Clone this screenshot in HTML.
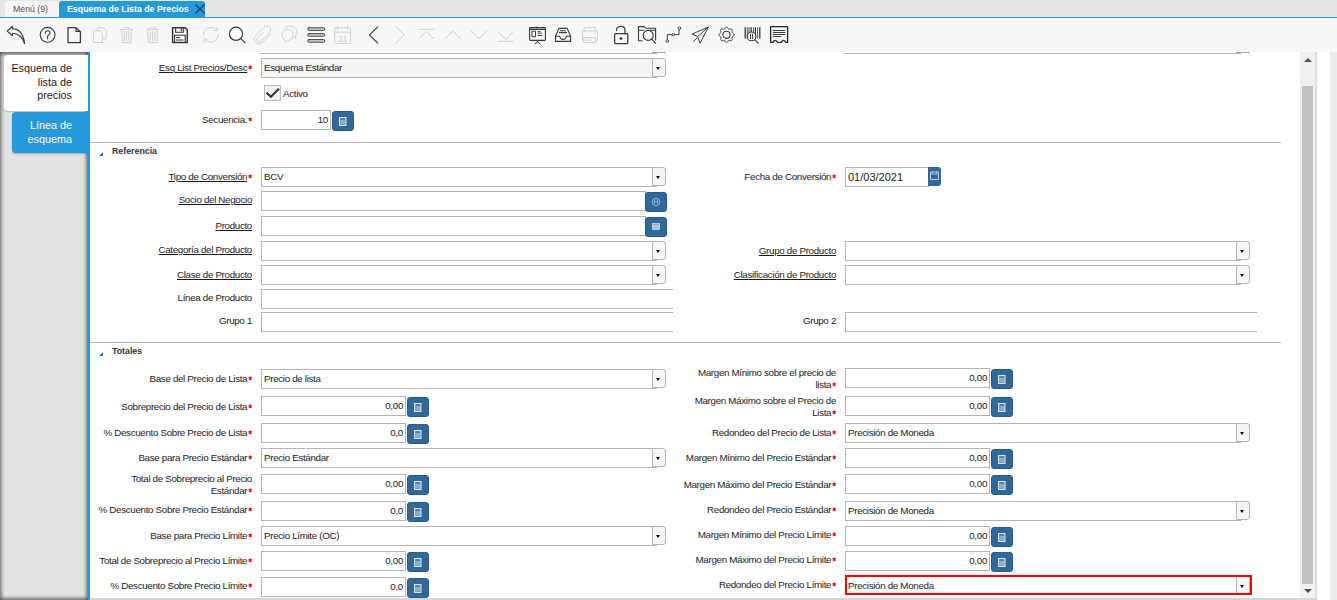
<!DOCTYPE html><html><head><meta charset='utf-8'><style>
*{box-sizing:border-box;margin:0;padding:0}
html,body{width:1337px;height:600px;overflow:hidden;background:#fff;font-family:"Liberation Sans",sans-serif;color:#333}
.a{position:absolute}
.lbl{position:absolute;font-size:9.8px;letter-spacing:-.33px;color:#1c1c1c;white-space:nowrap;text-align:right;line-height:11.7px}
.lbl u{text-decoration:underline;text-underline-offset:1px}
.req{position:relative;top:-1.2px;margin-left:.4px}
.inp{position:absolute;border:1px solid #b5b5b5;background:#fff;font-size:9.8px;letter-spacing:-.33px;color:#1c1c1c;padding-left:2px;white-space:nowrap;overflow:hidden}
.num{text-align:right;padding-right:2px;padding-left:0}
.ddb{position:absolute;width:14px;border:1px solid #b5b5b5;border-radius:0 3px 3px 0;background:#f5f5f5}
.ddb:after{content:"";position:absolute;left:3.3px;top:7.5px;border-left:2.8px solid transparent;border-right:2.8px solid transparent;border-top:3px solid #000}
.btn{position:absolute;width:22px;height:20px;background:#30689c;border:1px solid #245c8e;border-radius:3px}
.sep{position:absolute;left:90px;width:1191px;height:1px;background:#b8b8b8}
.hdr{position:absolute;font-size:8.8px;font-weight:bold;color:#333;line-height:11px}
.tri{position:absolute;width:0;height:0;border-left:4px solid transparent;border-bottom:4px solid #1b6fd0}
.hl{position:absolute;height:1px;background:#b5b5b5}
</style></head><body>
<div class='a' style='left:0;top:0;width:1337px;height:18px;background:#e6e6e6'></div>
<div class='a' style='left:5px;top:1px;width:54px;height:16px;background:#f4f4f4;border-radius:2px 2px 0 0'></div>
<div class='a' style='left:13px;top:3px;font-size:8.75px;color:#555;line-height:12px'>Menú (9)</div>
<div class='a' style='left:59px;top:1px;width:146px;height:17px;background:#2499dc;border-radius:3px 3px 0 0'></div>
<div class='a' style='left:67px;top:3px;font-size:8.8px;font-weight:bold;color:#fff;line-height:12px'>Esquema de Lista de Precios</div>
<svg class='a' style='left:194px;top:3px' width='12' height='12' viewBox='0 0 12 12'><path d='M1.5 1.5L10.5 10.5M10.5 1.5L1.5 10.5' stroke='#1a3550' stroke-width='1.1'/></svg>
<div class='a' style='left:0;top:17px;width:1337px;height:1px;background:#2499dc'></div>
<div class='a' style='left:0;top:18px;width:1337px;height:34px;background:#f7f7f7'></div>
<svg class='a' style='left:0;top:0' width='800' height='52' viewBox='0 0 800 52' fill='none' stroke-linecap='round' stroke-linejoin='round'><path d='M7.3 31 L12.3 26.3 L12.5 28.6 C18.5 29 23.5 33.5 24.6 43.6 C22.6 37.3 18.5 33.4 12.5 33.2 L12.3 35.8 Z' stroke='#3a3a3a' stroke-width='1.1'/><circle cx='47.6' cy='34.8' r='7.4' stroke='#3a3a3a' stroke-width='1.1'/><path d='M45.4 33.2 C45.3 31.6 46.4 30.7 47.7 30.7 C49 30.7 50 31.6 50 32.9 C50 34.6 47.6 34.9 47.6 36.6 L47.6 38.7' stroke='#3a3a3a' stroke-width='1.1'/><path d='M68 27.6 H76 L80.4 32 V42.6 H68 Z' stroke='#3a3a3a' stroke-width='1.3'/><path d='M76 27.8 V31.4 H80.2' stroke='#3a3a3a' stroke-width='1.2'/><path d='M97.8 30 V27.8 H103.6 L106.3 30.5 V38.8 H103' stroke='#cfcfcf' stroke-width='1'/><path d='M93.8 30.8 H99.6 L102.4 33.6 V42.5 H93.8 Z' stroke='#cfcfcf' stroke-width='1'/><path d='M120.3 29.4 H132.9 M124.3 29.4 V27.4 H128.9 V29.4 M121.6 29.6 L122.5 42.6 H130.8 L131.6 29.6 M124.4 31.5 V40.5 M126.6 31.5 V40.5 M128.8 31.5 V40.5' stroke='#cfcfcf' stroke-width='1'/><path d='M147.3 29.4 H157.8 M148.5 29.4 C148.5 27 151.5 27 152.5 28.5 C153.5 27 156.6 27 156.6 29.4 M147.6 29.6 L148.5 42.6 H156.8 L157.6 29.6 M150.4 31.5 V40.5 M152.6 31.5 V40.5 M154.8 31.5 V40.5' stroke='#cfcfcf' stroke-width='1'/><path d='M172.6 27.8 H185.3 L187.3 29.8 V42.6 H172.6 Z' stroke='#3a3a3a' stroke-width='1.5'/><path d='M175.6 27.8 V32.3 H183.3 V27.8' stroke='#3a3a3a' stroke-width='1.1'/><path d='M181.3 28.6 V30.8' stroke='#3a3a3a' stroke-width='1.1'/><path d='M174.6 42.6 V35.2 H185.2 V42.6' stroke='#3a3a3a' stroke-width='1.1'/><path d='M176.5 37.5 H179.5 M176.5 40 H183' stroke='#3a3a3a' stroke-width='1.1'/><path d='M203.5 35 C203.5 30.5 206.8 27.5 210.8 27.5 C213.3 27.5 215.3 28.6 216.8 30.4 M217.2 27.3 V30.6 H214' stroke='#cfcfcf' stroke-width='1'/><path d='M218 34.5 C218 39 214.7 42.2 210.7 42.2 C208.2 42.2 206.2 41.1 204.7 39.3 M204.3 42.4 V39.1 H207.5' stroke='#cfcfcf' stroke-width='1'/><circle cx='236' cy='33.8' r='6.6' stroke='#3a3a3a' stroke-width='1.2'/><path d='M240.8 38.6 L244.8 42.6' stroke='#3a3a3a' stroke-width='1.2'/><path d='M263.2 32.5 L257.4 38.3 C256.4 39.3 256.8 40.7 257.6 41.4 C258.6 42.3 259.8 42.1 260.7 41.2 L269.3 32.6 C271.2 30.7 271.2 28.4 269.6 26.9 C268.1 25.4 265.8 25.5 264 27.3 L255.8 35.5 C253.8 37.5 253.6 40.6 255.6 42.5 C257.6 44.4 260.5 44.3 262.5 42.3 L270.6 34.2' stroke='#cfcfcf' stroke-width='1'/><path d='M291 38.6 C294.5 37.6 297 35 297 32 C297 28.6 294 26.2 290.2 26.2 C287.6 26.2 285.4 27.3 284.2 29' stroke='#cfcfcf' stroke-width='1'/><path d='M296 38.6 L295.2 36.2' stroke='#cfcfcf' stroke-width='1'/><path d='M285.3 42.2 L284.6 39.6 C282.4 38.5 282 36.7 282 35 C282 31.7 284.9 29.6 288.2 29.6 C291.5 29.6 293.2 31.8 293.2 34.8 C293.2 38 290.7 40.4 287.3 40.4 L285.3 42.2' stroke='#cfcfcf' stroke-width='1'/><rect x='307.8' y='27.8' width='17' height='2.6' rx='1.3' fill='#d4d4d4' stroke='#3a3a3a' stroke-width='.95'/><rect x='307.8' y='33.6' width='17' height='2.6' rx='1.3' fill='#d4d4d4' stroke='#3a3a3a' stroke-width='.95'/><rect x='307.8' y='39.6' width='17' height='2.6' rx='1.3' fill='#d4d4d4' stroke='#3a3a3a' stroke-width='.95'/><rect x='334.6' y='27.8' width='16' height='15.6' rx='1' stroke='#cfcfcf' stroke-width='1'/><path d='M334.6 32.2 H350.6 M337.6 26.3 V29.5 M347.6 26.3 V29.5' stroke='#cfcfcf' stroke-width='1'/><text x='342.6' y='41.8' font-size='9' text-anchor='middle' fill='#d2d2d2' stroke='none' font-family='Liberation Sans'>31</text><path d='M377.7 27 L369.4 35 L377.7 43' stroke='#4a4a4a' stroke-width='1.1'/><path d='M396.2 27 L404.2 35 L396.2 43' stroke='#cfcfcf' stroke-width='1'/><path d='M419 29.3 H434 M419.2 38.8 L426.5 31.3 L433.8 38.8' stroke='#cfcfcf' stroke-width='1'/><path d='M445.3 38.8 L452.8 31.2 L460.6 38.8' stroke='#cfcfcf' stroke-width='1'/><path d='M471.3 31.2 L479 38.8 L486.8 31.2' stroke='#cfcfcf' stroke-width='1'/><path d='M498.4 32 L505.6 39.6 L512.8 32 M498.2 41.3 H513' stroke='#cfcfcf' stroke-width='1'/><rect x='529.6' y='27.6' width='15.8' height='12.8' rx='.8' stroke='#3a3a3a' stroke-width='1.1'/><path d='M529.6 29.3 H545.4' stroke='#3a3a3a' stroke-width='1.2'/><path d='M536.8 27 V27.8' stroke='#3a3a3a' stroke-width='1.2'/><rect x='532.3' y='31.2' width='3.2' height='5.6' stroke='#3a3a3a' stroke-width='1'/><path d='M538 31.6 H540 M538 33.2 H541.5 M538 35.5 H542' stroke='#3a3a3a' stroke-width='1'/><path d='M537.5 40.5 V42 L535 43.8 M537.5 42 L540 43.8' stroke='#3a3a3a' stroke-width='1'/><path d='M555.5 36.2 L558.8 28.4 H567.2 L570.6 36.2 V41.4 H555.5 Z' stroke='#3a3a3a' stroke-width='1.1'/><path d='M555.5 36.2 H559.8 C560 38.6 561.6 39.4 563 39.4 C564.4 39.4 566 38.6 566.2 36.2 H570.6' stroke='#3a3a3a' stroke-width='1.1'/><path d='M560.5 30.8 H565.5 M559.5 32.6 H566.5' stroke='#3a3a3a' stroke-width='1.1'/><path d='M584.2 31 V27.6 H595.6 V31 M583.6 40.3 H582.4 V31 H597.4 V40.3 H596.2 M584.2 37.6 H595.6 V42.6 H584.2 Z M587 40.2 H591' stroke='#cfcfcf' stroke-width='1'/><path d='M593.2 33.4 H593.4 M595 33.4 H595.2' stroke='#cfcfcf' stroke-width='1'/><path d='M616.5 30.6 V29.6 C616.5 27.6 618.6 26.3 620.8 26.3 C623 26.3 625 27.7 625 30 V34' stroke='#3a3a3a' stroke-width='1.2'/><rect x='614.6' y='33.6' width='13.2' height='10' rx='1.2' stroke='#3a3a3a' stroke-width='1.3'/><circle cx='621' cy='38.6' r='1.1' fill='#3a3a3a' stroke='#3a3a3a' stroke-width='.6'/><path d='M642.2 40.7 H638.5 V26.6 H644 L646 28.3 H655.6 V40 M638.5 30.2 H644 M649.5 30.2 H655.6' stroke='#3a3a3a' stroke-width='1.1'/><circle cx='648.2' cy='35.4' r='5' stroke='#3a3a3a' stroke-width='1.1'/><path d='M651.8 39.2 L655.6 43.3' stroke='#3a3a3a' stroke-width='1.1'/><path d='M667.3 39.6 V34.6 H672 M674.5 34.6 H679 V29.5' stroke='#3a3a3a' stroke-width='1'/><circle cx='667.3' cy='41.2' r='1.3' stroke='#3a3a3a' stroke-width='.9'/><circle cx='673.3' cy='34.6' r='1.3' stroke='#3a3a3a' stroke-width='.9'/><circle cx='679.4' cy='28.2' r='1.3' stroke='#3a3a3a' stroke-width='.9'/><path d='M708 27.3 L692.2 34 L697.6 36.6 L700 42.8 Z M708 27.3 L697.6 36.6 M696.8 38.2 L693.4 41.4' stroke='#3a3a3a' stroke-width='1'/><path d='M734.25 34.80 L734.12 35.30 L733.76 35.76 L733.27 36.15 L732.75 36.48 L732.34 36.78 L732.09 37.12 L732.03 37.53 L732.11 38.04 L732.24 38.63 L732.31 39.26 L732.24 39.83 L731.98 40.28 L731.53 40.54 L730.96 40.61 L730.33 40.54 L729.74 40.41 L729.23 40.33 L728.82 40.39 L728.48 40.64 L728.18 41.05 L727.85 41.57 L727.46 42.06 L727.00 42.42 L726.50 42.55 L726.00 42.42 L725.54 42.06 L725.15 41.57 L724.82 41.05 L724.52 40.64 L724.18 40.39 L723.77 40.33 L723.26 40.41 L722.67 40.54 L722.04 40.61 L721.47 40.54 L721.02 40.28 L720.76 39.83 L720.69 39.26 L720.76 38.63 L720.89 38.04 L720.97 37.53 L720.91 37.12 L720.66 36.78 L720.25 36.48 L719.73 36.15 L719.24 35.76 L718.88 35.30 L718.75 34.80 L718.88 34.30 L719.24 33.84 L719.73 33.45 L720.25 33.12 L720.66 32.82 L720.91 32.48 L720.97 32.07 L720.89 31.56 L720.76 30.97 L720.69 30.34 L720.76 29.77 L721.02 29.32 L721.47 29.06 L722.04 28.99 L722.67 29.06 L723.26 29.19 L723.77 29.27 L724.18 29.21 L724.52 28.96 L724.82 28.55 L725.15 28.03 L725.54 27.54 L726.00 27.18 L726.50 27.05 L727.00 27.18 L727.46 27.54 L727.85 28.03 L728.18 28.55 L728.48 28.96 L728.82 29.21 L729.23 29.27 L729.74 29.19 L730.33 29.06 L730.96 28.99 L731.53 29.06 L731.98 29.32 L732.24 29.77 L732.31 30.34 L732.24 30.97 L732.11 31.56 L732.03 32.07 L732.09 32.48 L732.34 32.82 L732.75 33.12 L733.27 33.45 L733.76 33.84 L734.12 34.30 Z' stroke='#3a3a3a' stroke-width='1'/><circle cx='726.5' cy='34.8' r='3.6' stroke='#3a3a3a' stroke-width='1.1'/><path d='M745.2 27.3 V38.6' stroke='#3a3a3a' stroke-width='1.3' stroke-linecap='butt'/><path d='M747.3 27.3 V38.6' stroke='#3a3a3a' stroke-width='0.8' stroke-linecap='butt'/><path d='M749 27.3 V38.6' stroke='#3a3a3a' stroke-width='0.9' stroke-linecap='butt'/><path d='M751.2 27.3 V38.6' stroke='#3a3a3a' stroke-width='1.3' stroke-linecap='butt'/><path d='M753.6 27.3 V38.6' stroke='#3a3a3a' stroke-width='0.8' stroke-linecap='butt'/><path d='M755.4 27.3 V38.6' stroke='#3a3a3a' stroke-width='1.2' stroke-linecap='butt'/><path d='M757.6 27.3 V38.6' stroke='#3a3a3a' stroke-width='0.8' stroke-linecap='butt'/><path d='M759.8 27.3 V38.6' stroke='#3a3a3a' stroke-width='1.3' stroke-linecap='butt'/><circle cx='751.6' cy='36.4' r='4.4' fill='#f7f7f7' stroke='#3a3a3a' stroke-width='1.1'/><path d='M750.5 34.3 V38.6 M752.4 34 V38.8' stroke='#3a3a3a' stroke-width='1'/><path d='M754.8 39.8 L758.4 43.2' stroke='#3a3a3a' stroke-width='1.1'/><path d='M770.6 26.6 H787.6 V42.4 H785.8 C785.5 41 784.7 40.3 783.6 40.3 C782.5 40.3 781.7 41 781.4 42.4 H777.4 C777.1 41 776.3 40.3 775.2 40.3 C774.1 40.3 773.3 41 773 42.4 H770.6 Z' stroke='#262626' stroke-width='1.3'/><path d='M772.8 30.5 H785.2 M772.8 32.5 H785.2 M772.8 34.5 H785.2 M772.8 36.5 H781' stroke='#3a3a3a' stroke-width='1' stroke-linecap='butt'/></svg>
<div class='a' style='left:0;top:52px;width:88px;height:548px;background:#e3e3e3;box-shadow:inset 0 3px 3px rgba(0,0,0,.38), inset 3px 0 3px rgba(0,0,0,.2), inset -3px 0 3px rgba(0,0,0,.25), inset 0 -3px 3px rgba(0,0,0,.3)'></div>
<div class='a' style='left:4px;top:55px;width:84px;height:55.5px;background:#fff;border-radius:4px 0 0 4px;box-shadow:0 1px 2px rgba(0,0,0,.2)'></div>
<div class='a' style='left:4px;top:62px;width:68px;font-size:10.8px;line-height:13.7px;color:#222;text-align:right'>Esquema de<br>lista de<br>precios</div>
<div class='a' style='left:12px;top:112px;width:76px;height:41px;background:#2499dc;border-radius:4px 0 0 4px;box-shadow:0 1px 2px rgba(0,0,0,.25)'></div>
<div class='a' style='left:4px;top:119px;width:68px;font-size:10.8px;line-height:13.8px;color:#fff;text-align:right'>Línea de<br>esquema</div>
<div class='a' style='left:88px;top:52px;width:2px;height:548px;background:#2499dc'></div>
<div class='a' style='left:1300px;top:52px;width:15px;height:547px;background:#f0f0f0'></div>
<div class='a' style='left:1302px;top:86px;width:11px;height:498px;background:#c1c1c1'></div>
<div class='a' style='left:1303.5px;top:57.5px;width:0;height:0;border-left:4px solid transparent;border-right:4px solid transparent;border-bottom:4.5px solid #505050'></div>
<div class='a' style='left:1303.5px;top:588.5px;width:0;height:0;border-left:4px solid transparent;border-right:4px solid transparent;border-top:4.5px solid #505050'></div>
<div class='a' style='left:1315px;top:52px;width:3px;height:548px;background:linear-gradient(90deg,#cfcfcf,#ececec 60%,#fafafa)'></div>
<div class='a' style='left:1330px;top:52px;width:7px;height:548px;background:#ebebeb'></div>
<div class='a' style='left:90px;top:598px;width:1227px;height:2px;background:#d6d6d6'></div>
<div class='hl' style='left:261px;top:53px;width:396px'></div>
<div class='hl' style='left:652px;top:52px;width:14px;background:#aaa'></div>
<div class='hl' style='left:845px;top:53px;width:396px'></div>
<div class='hl' style='left:1236px;top:52px;width:14px;background:#aaa'></div>
<div class='lbl' style='right:1085px;top:62px'><u>Esq List Precios/Desc</u><svg class='req' width='4.4' height='5' viewBox='0 0 4.4 5'><path d='M2.2 .6 V4.2 M.6 1.5 L3.8 3.3 M.6 3.3 L3.8 1.5' stroke='#f00' stroke-width='1.15'/></svg></div>
<div class='inp' style='left:261px;top:58px;width:396px;height:20px;background:#f4f4f4;line-height:18px'>Esquema Estándar</div>
<div class='ddb' style='left:652px;top:58px;height:19px'></div>
<div class='a' style='left:264px;top:85px;width:17px;height:16px;background:#f1f1f1;border:1px solid #b3c0cc'></div>
<svg class='a' style='left:265px;top:86px' width='15' height='14' viewBox='0 0 15 14'><path d='M1.6 6.8L5.9 10.8L14 2.7' fill='none' stroke='#333' stroke-width='2'/></svg>
<div class='a' style='left:283px;top:88px;font-size:9.8px;letter-spacing:-.33px;line-height:12px;color:#262626'>Activo</div>
<div class='lbl' style='right:1085px;top:114px'>Secuencia.<svg class='req' width='4.4' height='5' viewBox='0 0 4.4 5'><path d='M2.2 .6 V4.2 M.6 1.5 L3.8 3.3 M.6 3.3 L3.8 1.5' stroke='#f00' stroke-width='1.15'/></svg></div>
<div class='inp num' style='left:261px;top:110px;width:70px;height:20px;line-height:18px'>10</div>
<div class='btn' style='left:332px;top:111px'></div>
<svg class='a' style='left:339px;top:117px' width='8' height='9' viewBox='0 0 8 9'><rect x='.5' y='.5' width='6.5' height='8' fill='#7d9dbd' stroke='#d9e3ec' stroke-width='1'/><path d='M1.5 2 H6' stroke='#2e6595' stroke-width='1'/><path d='M1.5 4 H6 M1.5 6 H6' stroke='#a9c0d6' stroke-width='.8'/></svg>
<div class='sep' style='top:142px'></div>
<div class='tri' style='left:99px;top:152px'></div>
<div class='hdr' style='left:112px;top:146px'>Referencia</div>
<div class='lbl' style='right:1085px;top:171px'><u>Tipo de Conversión</u><svg class='req' width='4.4' height='5' viewBox='0 0 4.4 5'><path d='M2.2 .6 V4.2 M.6 1.5 L3.8 3.3 M.6 3.3 L3.8 1.5' stroke='#f00' stroke-width='1.15'/></svg></div>
<div class='inp' style='left:261px;top:167px;width:396px;height:20px;background:#fff;line-height:18px'>BCV</div>
<div class='ddb' style='left:652px;top:167px;height:19px'></div>
<div class='lbl' style='right:501px;top:171px'>Fecha de Conversión<svg class='req' width='4.4' height='5' viewBox='0 0 4.4 5'><path d='M2.2 .6 V4.2 M.6 1.5 L3.8 3.3 M.6 3.3 L3.8 1.5' stroke='#f00' stroke-width='1.15'/></svg></div>
<div class='inp' style='left:845px;top:167px;width:84px;height:20px;line-height:18px;font-size:11px;letter-spacing:0;padding-left:2px'>01/03/2021</div>
<div class='a' style='left:928px;top:167px;width:13px;height:19px;background:#30689c;border-radius:0 3px 3px 0'></div>
<svg class='a' style='left:929px;top:169px' width='11' height='12' viewBox='0 0 11 12'><path d='M1.5 3 H9.5 V10.5 H1.5 Z M1.5 5 H9.5 M3.5 2 V3.5 M7.5 2 V3.5' fill='none' stroke='#c3d4e4' stroke-width='.9'/></svg>
<div class='lbl' style='right:1085px;top:194px'><u>Socio del Negocio</u></div>
<div class='inp' style='left:261px;top:191px;width:385px;height:20px;line-height:18px'></div>
<div class='btn' style='left:645px;top:192px'></div>
<svg class='a' style='left:651px;top:197px' width='10' height='10' viewBox='0 0 10 10'><circle cx='5' cy='5' r='3.6' fill='none' stroke='#a7bfd6' stroke-width='.9'/><path d='M3.5 3.2 V6.8 M6.5 3.2 V6.8 M3.5 5 H6.5' stroke='#a7bfd6' stroke-width='.7'/></svg>
<div class='lbl' style='right:1085px;top:220px'><u>Producto</u></div>
<div class='inp' style='left:261px;top:216px;width:385px;height:20px;line-height:18px'></div>
<div class='btn' style='left:645px;top:217px'></div>
<svg class='a' style='left:652px;top:223px' width='8' height='8' viewBox='0 0 8 8'><rect x='.5' y='.5' width='7' height='6' fill='#90acc8' stroke='#c9d7e5' stroke-width='.8'/><path d='M2 2 V6 M4 2 V6 M6 2 V6' stroke='#e4ebf2' stroke-width='.8'/></svg>
<div class='lbl' style='right:1085px;top:244px'><u>Categoría del Producto</u></div>
<div class='inp' style='left:261px;top:241px;width:396px;height:20px;background:#fff;line-height:18px'></div>
<div class='ddb' style='left:652px;top:241px;height:19px'></div>
<div class='lbl' style='right:501px;top:245px'><u>Grupo de Producto</u></div>
<div class='inp' style='left:845px;top:241px;width:396px;height:20px;background:#fff;line-height:18px'></div>
<div class='ddb' style='left:1236px;top:241px;height:19px'></div>
<div class='lbl' style='right:1085px;top:269px'><u>Clase de Producto</u></div>
<div class='inp' style='left:261px;top:265px;width:396px;height:20px;background:#fff;line-height:18px'></div>
<div class='ddb' style='left:652px;top:265px;height:19px'></div>
<div class='lbl' style='right:501px;top:269px'><u>Clasificación de Producto</u></div>
<div class='inp' style='left:845px;top:265px;width:396px;height:20px;background:#fff;line-height:18px'></div>
<div class='ddb' style='left:1236px;top:265px;height:19px'></div>
<div class='lbl' style='right:1085px;top:292px'>Línea de Producto</div>
<div class='a' style='left:261px;top:289px;width:412px;height:20px;border:1px solid #b5b5b5;border-right:none'></div>
<div class='lbl' style='right:1085px;top:315px'>Grupo 1</div>
<div class='a' style='left:261px;top:312px;width:412px;height:20px;border:1px solid #b5b5b5;border-right:none'></div>
<div class='lbl' style='right:501px;top:315px'>Grupo 2</div>
<div class='a' style='left:845px;top:312px;width:412px;height:20px;border:1px solid #b5b5b5;border-right:none'></div>
<div class='sep' style='top:342px'></div>
<div class='tri' style='left:99px;top:352px'></div>
<div class='hdr' style='left:112px;top:346px'>Totales</div>
<div class='lbl' style='right:1085px;top:373px'>Base del Precio de Lista<svg class='req' width='4.4' height='5' viewBox='0 0 4.4 5'><path d='M2.2 .6 V4.2 M.6 1.5 L3.8 3.3 M.6 3.3 L3.8 1.5' stroke='#f00' stroke-width='1.15'/></svg></div>
<div class='inp' style='left:261px;top:369px;width:396px;height:20px;background:#fff;line-height:18px'>Precio de lista</div>
<div class='ddb' style='left:652px;top:369px;height:19px'></div>
<div class='lbl' style='right:1085px;top:401px'>Sobreprecio del Precio de Lista<svg class='req' width='4.4' height='5' viewBox='0 0 4.4 5'><path d='M2.2 .6 V4.2 M.6 1.5 L3.8 3.3 M.6 3.3 L3.8 1.5' stroke='#f00' stroke-width='1.15'/></svg></div>
<div class='inp num' style='left:261px;top:396px;width:145px;height:20px;line-height:18px'>0,00</div>
<div class='btn' style='left:407px;top:397px'></div>
<svg class='a' style='left:414px;top:403px' width='8' height='9' viewBox='0 0 8 9'><rect x='.5' y='.5' width='6.5' height='8' fill='#7d9dbd' stroke='#d9e3ec' stroke-width='1'/><path d='M1.5 2 H6' stroke='#2e6595' stroke-width='1'/><path d='M1.5 4 H6 M1.5 6 H6' stroke='#a9c0d6' stroke-width='.8'/></svg>
<div class='lbl' style='right:1085px;top:427px'>% Descuento Sobre Precio de Lista<svg class='req' width='4.4' height='5' viewBox='0 0 4.4 5'><path d='M2.2 .6 V4.2 M.6 1.5 L3.8 3.3 M.6 3.3 L3.8 1.5' stroke='#f00' stroke-width='1.15'/></svg></div>
<div class='inp num' style='left:261px;top:423px;width:145px;height:20px;line-height:18px'>0,0</div>
<div class='btn' style='left:407px;top:424px'></div>
<svg class='a' style='left:414px;top:430px' width='8' height='9' viewBox='0 0 8 9'><rect x='.5' y='.5' width='6.5' height='8' fill='#7d9dbd' stroke='#d9e3ec' stroke-width='1'/><path d='M1.5 2 H6' stroke='#2e6595' stroke-width='1'/><path d='M1.5 4 H6 M1.5 6 H6' stroke='#a9c0d6' stroke-width='.8'/></svg>
<div class='lbl' style='right:1085px;top:452px'>Base para Precio Estándar<svg class='req' width='4.4' height='5' viewBox='0 0 4.4 5'><path d='M2.2 .6 V4.2 M.6 1.5 L3.8 3.3 M.6 3.3 L3.8 1.5' stroke='#f00' stroke-width='1.15'/></svg></div>
<div class='inp' style='left:261px;top:448px;width:396px;height:20px;background:#fff;line-height:18px'>Precio Estándar</div>
<div class='ddb' style='left:652px;top:448px;height:19px'></div>
<div class='lbl' style='right:1085px;top:473px'>Total de Sobreprecio al Precio<br>Estándar<svg class='req' width='4.4' height='5' viewBox='0 0 4.4 5'><path d='M2.2 .6 V4.2 M.6 1.5 L3.8 3.3 M.6 3.3 L3.8 1.5' stroke='#f00' stroke-width='1.15'/></svg></div>
<div class='inp num' style='left:261px;top:474px;width:145px;height:20px;line-height:18px'>0,00</div>
<div class='btn' style='left:407px;top:475px'></div>
<svg class='a' style='left:414px;top:481px' width='8' height='9' viewBox='0 0 8 9'><rect x='.5' y='.5' width='6.5' height='8' fill='#7d9dbd' stroke='#d9e3ec' stroke-width='1'/><path d='M1.5 2 H6' stroke='#2e6595' stroke-width='1'/><path d='M1.5 4 H6 M1.5 6 H6' stroke='#a9c0d6' stroke-width='.8'/></svg>
<div class='lbl' style='right:1085px;top:504px'>% Descuento Sobre Precio Estándar<svg class='req' width='4.4' height='5' viewBox='0 0 4.4 5'><path d='M2.2 .6 V4.2 M.6 1.5 L3.8 3.3 M.6 3.3 L3.8 1.5' stroke='#f00' stroke-width='1.15'/></svg></div>
<div class='inp num' style='left:261px;top:501px;width:145px;height:20px;line-height:18px'>0,0</div>
<div class='btn' style='left:407px;top:502px'></div>
<svg class='a' style='left:414px;top:508px' width='8' height='9' viewBox='0 0 8 9'><rect x='.5' y='.5' width='6.5' height='8' fill='#7d9dbd' stroke='#d9e3ec' stroke-width='1'/><path d='M1.5 2 H6' stroke='#2e6595' stroke-width='1'/><path d='M1.5 4 H6 M1.5 6 H6' stroke='#a9c0d6' stroke-width='.8'/></svg>
<div class='lbl' style='right:1085px;top:530px'>Base para Precio Límite<svg class='req' width='4.4' height='5' viewBox='0 0 4.4 5'><path d='M2.2 .6 V4.2 M.6 1.5 L3.8 3.3 M.6 3.3 L3.8 1.5' stroke='#f00' stroke-width='1.15'/></svg></div>
<div class='inp' style='left:261px;top:526px;width:396px;height:20px;background:#fff;line-height:18px'>Precio Límite (OC)</div>
<div class='ddb' style='left:652px;top:526px;height:19px'></div>
<div class='lbl' style='right:1085px;top:555px'>Total de Sobreprecio al Precio Límite<svg class='req' width='4.4' height='5' viewBox='0 0 4.4 5'><path d='M2.2 .6 V4.2 M.6 1.5 L3.8 3.3 M.6 3.3 L3.8 1.5' stroke='#f00' stroke-width='1.15'/></svg></div>
<div class='inp num' style='left:261px;top:551px;width:145px;height:20px;line-height:18px'>0,00</div>
<div class='btn' style='left:407px;top:552px'></div>
<svg class='a' style='left:414px;top:558px' width='8' height='9' viewBox='0 0 8 9'><rect x='.5' y='.5' width='6.5' height='8' fill='#7d9dbd' stroke='#d9e3ec' stroke-width='1'/><path d='M1.5 2 H6' stroke='#2e6595' stroke-width='1'/><path d='M1.5 4 H6 M1.5 6 H6' stroke='#a9c0d6' stroke-width='.8'/></svg>
<div class='lbl' style='right:1085px;top:580px'>% Descuento Sobre Precio Límite<svg class='req' width='4.4' height='5' viewBox='0 0 4.4 5'><path d='M2.2 .6 V4.2 M.6 1.5 L3.8 3.3 M.6 3.3 L3.8 1.5' stroke='#f00' stroke-width='1.15'/></svg></div>
<div class='inp num' style='left:261px;top:577px;width:145px;height:20px;line-height:18px'>0,0</div>
<div class='btn' style='left:407px;top:578px'></div>
<svg class='a' style='left:414px;top:584px' width='8' height='9' viewBox='0 0 8 9'><rect x='.5' y='.5' width='6.5' height='8' fill='#7d9dbd' stroke='#d9e3ec' stroke-width='1'/><path d='M1.5 2 H6' stroke='#2e6595' stroke-width='1'/><path d='M1.5 4 H6 M1.5 6 H6' stroke='#a9c0d6' stroke-width='.8'/></svg>
<div class='lbl' style='right:501px;top:367px'>Margen Mínimo sobre el precio de<br>lista<svg class='req' width='4.4' height='5' viewBox='0 0 4.4 5'><path d='M2.2 .6 V4.2 M.6 1.5 L3.8 3.3 M.6 3.3 L3.8 1.5' stroke='#f00' stroke-width='1.15'/></svg></div>
<div class='inp num' style='left:845px;top:368px;width:145px;height:20px;line-height:18px'>0,00</div>
<div class='btn' style='left:991px;top:369px'></div>
<svg class='a' style='left:998px;top:375px' width='8' height='9' viewBox='0 0 8 9'><rect x='.5' y='.5' width='6.5' height='8' fill='#7d9dbd' stroke='#d9e3ec' stroke-width='1'/><path d='M1.5 2 H6' stroke='#2e6595' stroke-width='1'/><path d='M1.5 4 H6 M1.5 6 H6' stroke='#a9c0d6' stroke-width='.8'/></svg>
<div class='lbl' style='right:501px;top:395px'>Margen Máximo sobre el Precio de<br>Lista<svg class='req' width='4.4' height='5' viewBox='0 0 4.4 5'><path d='M2.2 .6 V4.2 M.6 1.5 L3.8 3.3 M.6 3.3 L3.8 1.5' stroke='#f00' stroke-width='1.15'/></svg></div>
<div class='inp num' style='left:845px;top:396px;width:145px;height:20px;line-height:18px'>0,00</div>
<div class='btn' style='left:991px;top:397px'></div>
<svg class='a' style='left:998px;top:403px' width='8' height='9' viewBox='0 0 8 9'><rect x='.5' y='.5' width='6.5' height='8' fill='#7d9dbd' stroke='#d9e3ec' stroke-width='1'/><path d='M1.5 2 H6' stroke='#2e6595' stroke-width='1'/><path d='M1.5 4 H6 M1.5 6 H6' stroke='#a9c0d6' stroke-width='.8'/></svg>
<div class='lbl' style='right:501px;top:427px'>Redondeo del Precio de Lista<svg class='req' width='4.4' height='5' viewBox='0 0 4.4 5'><path d='M2.2 .6 V4.2 M.6 1.5 L3.8 3.3 M.6 3.3 L3.8 1.5' stroke='#f00' stroke-width='1.15'/></svg></div>
<div class='inp' style='left:845px;top:423px;width:396px;height:20px;background:#fff;line-height:18px'>Precisión de Moneda</div>
<div class='ddb' style='left:1236px;top:423px;height:19px'></div>
<div class='lbl' style='right:501px;top:452px'>Margen Mínimo del Precio Estándar<svg class='req' width='4.4' height='5' viewBox='0 0 4.4 5'><path d='M2.2 .6 V4.2 M.6 1.5 L3.8 3.3 M.6 3.3 L3.8 1.5' stroke='#f00' stroke-width='1.15'/></svg></div>
<div class='inp num' style='left:845px;top:448px;width:145px;height:20px;line-height:18px'>0,00</div>
<div class='btn' style='left:991px;top:449px'></div>
<svg class='a' style='left:998px;top:455px' width='8' height='9' viewBox='0 0 8 9'><rect x='.5' y='.5' width='6.5' height='8' fill='#7d9dbd' stroke='#d9e3ec' stroke-width='1'/><path d='M1.5 2 H6' stroke='#2e6595' stroke-width='1'/><path d='M1.5 4 H6 M1.5 6 H6' stroke='#a9c0d6' stroke-width='.8'/></svg>
<div class='lbl' style='right:501px;top:479px'>Margen Máximo del Precio Estándar<svg class='req' width='4.4' height='5' viewBox='0 0 4.4 5'><path d='M2.2 .6 V4.2 M.6 1.5 L3.8 3.3 M.6 3.3 L3.8 1.5' stroke='#f00' stroke-width='1.15'/></svg></div>
<div class='inp num' style='left:845px;top:474px;width:145px;height:20px;line-height:18px'>0,00</div>
<div class='btn' style='left:991px;top:475px'></div>
<svg class='a' style='left:998px;top:481px' width='8' height='9' viewBox='0 0 8 9'><rect x='.5' y='.5' width='6.5' height='8' fill='#7d9dbd' stroke='#d9e3ec' stroke-width='1'/><path d='M1.5 2 H6' stroke='#2e6595' stroke-width='1'/><path d='M1.5 4 H6 M1.5 6 H6' stroke='#a9c0d6' stroke-width='.8'/></svg>
<div class='lbl' style='right:501px;top:504px'>Redondeo del Precio Estándar<svg class='req' width='4.4' height='5' viewBox='0 0 4.4 5'><path d='M2.2 .6 V4.2 M.6 1.5 L3.8 3.3 M.6 3.3 L3.8 1.5' stroke='#f00' stroke-width='1.15'/></svg></div>
<div class='inp' style='left:845px;top:501px;width:396px;height:20px;background:#fff;line-height:18px'>Precisión de Moneda</div>
<div class='ddb' style='left:1236px;top:501px;height:19px'></div>
<div class='lbl' style='right:501px;top:529px'>Margen Mínimo del Precio Límite<svg class='req' width='4.4' height='5' viewBox='0 0 4.4 5'><path d='M2.2 .6 V4.2 M.6 1.5 L3.8 3.3 M.6 3.3 L3.8 1.5' stroke='#f00' stroke-width='1.15'/></svg></div>
<div class='inp num' style='left:845px;top:526px;width:145px;height:20px;line-height:18px'>0,00</div>
<div class='btn' style='left:991px;top:527px'></div>
<svg class='a' style='left:998px;top:533px' width='8' height='9' viewBox='0 0 8 9'><rect x='.5' y='.5' width='6.5' height='8' fill='#7d9dbd' stroke='#d9e3ec' stroke-width='1'/><path d='M1.5 2 H6' stroke='#2e6595' stroke-width='1'/><path d='M1.5 4 H6 M1.5 6 H6' stroke='#a9c0d6' stroke-width='.8'/></svg>
<div class='lbl' style='right:501px;top:554px'>Margen Máximo del Precio Límite<svg class='req' width='4.4' height='5' viewBox='0 0 4.4 5'><path d='M2.2 .6 V4.2 M.6 1.5 L3.8 3.3 M.6 3.3 L3.8 1.5' stroke='#f00' stroke-width='1.15'/></svg></div>
<div class='inp num' style='left:845px;top:551px;width:145px;height:20px;line-height:18px'>0,00</div>
<div class='btn' style='left:991px;top:552px'></div>
<svg class='a' style='left:998px;top:558px' width='8' height='9' viewBox='0 0 8 9'><rect x='.5' y='.5' width='6.5' height='8' fill='#7d9dbd' stroke='#d9e3ec' stroke-width='1'/><path d='M1.5 2 H6' stroke='#2e6595' stroke-width='1'/><path d='M1.5 4 H6 M1.5 6 H6' stroke='#a9c0d6' stroke-width='.8'/></svg>
<div class='lbl' style='right:501px;top:579px'>Redondeo del Precio Límite<svg class='req' width='4.4' height='5' viewBox='0 0 4.4 5'><path d='M2.2 .6 V4.2 M.6 1.5 L3.8 3.3 M.6 3.3 L3.8 1.5' stroke='#f00' stroke-width='1.15'/></svg></div>
<div class='inp' style='left:845px;top:576px;width:396px;height:19px;background:#fff;line-height:17px'>Precisión de Moneda</div>
<div class='ddb' style='left:1236px;top:576px;height:18px'></div>
<div class='a' style='left:845px;top:575px;width:407px;height:20px;border:2px solid #f00'></div>
</body></html>
